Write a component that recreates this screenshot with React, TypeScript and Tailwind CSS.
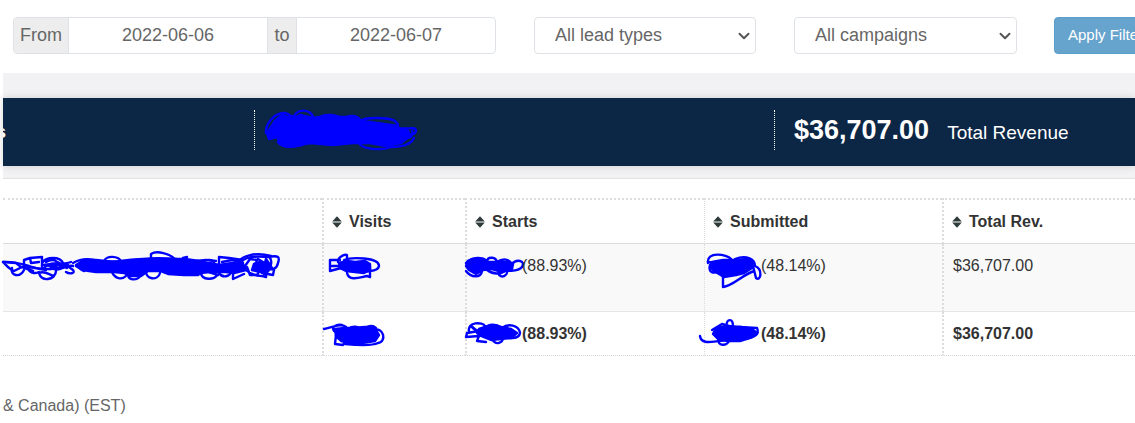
import type { ReactNode } from "react";
import { ChevronDown } from "lucide-react";

type ScribbleProps = {
  viewBox: string;
  className: string;
  fills?: string[];
  lines: string[];
};

// pen marks that hide the private numbers
function Scribble({ viewBox, className, fills = [], lines }: ScribbleProps) {
  return (
    <svg
      viewBox={viewBox}
      className={`shrink-0 overflow-visible ${className}`}
      fill="none"
      stroke="#0000ff"
      strokeWidth="2.4"
      strokeLinecap="round"
      strokeLinejoin="round"
      aria-hidden="true"
    >
      {fills.map((d) => (
        <path key={d} d={d} fill="#0000ff" />
      ))}
      {lines.map((d) => (
        <path key={d} d={d} />
      ))}
    </svg>
  );
}

function SortIcon() {
  return (
    <svg viewBox="0 0 10 12" className="h-3 w-[10px] shrink-0" fill="#2f3a3a" aria-hidden="true">
      <path d="M5 0.3 L9.8 5.4 H0.2 Z" />
      <path d="M5 11.7 L9.8 6.6 H0.2 Z" />
    </svg>
  );
}

function SortHeader({ children, className }: { children: ReactNode; className: string }) {
  return (
    <th scope="col" className={`border-t-2 border-b border-t-[#dcdcdc] border-b-[#d9dcdf] border-l-[#dcdcdc] pt-[10px] pb-[9px] pl-2 text-left [border-top-style:dotted] [border-left-style:dotted] ${className}`}>
      <button type="button" className="flex items-center gap-[7px] font-bold">
        <SortIcon />
        {children}
      </button>
    </th>
  );
}

function FilterSelect({ label, options, className }: { label: string; options: string[]; className: string }) {
  return (
    <div className={`relative shrink-0 ${className}`}>
      <select
        aria-label={label}
        className="h-[37px] w-full appearance-none rounded border border-[#dee2e6] bg-white pb-px pl-5 text-lg leading-6 text-[#666]"
      >
        {options.map((o) => (
          <option key={o}>{o}</option>
        ))}
      </select>
      <ChevronDown
        className="pointer-events-none absolute top-[10px] right-[3px] text-[#555]"
        size={18}
        strokeWidth={2.6}
      />
    </div>
  );
}

const cell = "pl-[9px] align-top border-l-[#dcdcdc] [border-left-style:dotted]";
const bodyCell = `${cell} border-b border-b-[#e4e6e8] bg-[#f9f9f9] pt-[10px] pb-[33px]`;
const totalCell = `${cell} border-b border-b-[#d4d4d4] [border-bottom-style:dotted] pt-[10px] pb-[9px] font-bold`;

export default function App() {
  return (
    <div className="overflow-x-hidden bg-white pb-4 pl-[3px] font-['Liberation_Sans',Arial,sans-serif] text-base leading-6 text-[#333]">
      <form className="flex pt-[17px] pb-[19px] pl-[10px]" onSubmit={(e) => e.preventDefault()}>
        <div className="mr-[38px] flex h-[37px] w-[483px] shrink-0 overflow-hidden rounded border border-[#dee2e6] text-lg leading-6 text-[#666]">
          <label htmlFor="from" className="flex w-[55px] items-center justify-center border-r border-[#dee2e6] bg-[#ededed] pb-px">
            From
          </label>
          <input id="from" type="text" defaultValue="2022-06-06" className="min-w-0 flex-1 pb-px text-center" />
          <label htmlFor="to" className="flex w-[30px] items-center justify-center border-x border-[#dee2e6] bg-[#ededed] pb-px">
            to
          </label>
          <input id="to" type="text" defaultValue="2022-06-07" className="min-w-0 flex-1 pb-px text-center" />
        </div>
        <FilterSelect label="Lead type" options={["All lead types"]} className="mr-[38px] w-[222px]" />
        <FilterSelect label="Campaign" options={["All campaigns"]} className="mr-[37px] w-[223px]" />
        <button type="submit" className="h-[37px] shrink-0 rounded border border-[#5b9ec9] bg-[#66a4cd] px-[13px] pb-px text-[15px] text-white">
          Apply Filters
        </button>
      </form>

      <section className="border-b border-[#e2e2e2] bg-[#f2f2f4] pt-[25px] pb-3">
        <div className="flex bg-[#0c2646] py-3 text-white shadow-[0_0_8px_rgba(0,0,0,0.15)]">
          <div className="flex h-11 w-[251px] shrink-0 items-center">
            <div className="flex w-[3px] justify-end overflow-hidden text-[19px] font-bold">s</div>
          </div>
          <div className="flex h-10 w-[520px] shrink-0 items-center border-l border-dotted border-white pl-[10px]">
            <Scribble
              viewBox="265 108 152 40"
              className="h-10 w-[152px]"
              fills={[
                "M267 131 L275 119 L282 113 L293 117 L300 113 L313 116 L327 114 L340 115 L353 115 L364 121 L380 122 L394 126 L408 129 L410 134 L401 141 L386 144 L370 141 L353 141 L333 143 L310 141 L294 144 L280 141 L277 135 L269 137 Z",
              ]}
              lines={[
                "M266 131 C265 122 275 110 285 111 C291 112 292 118 286 119 M294 118 C293 109 303 107 309 110 C314 113 315 118 308 120",
                "M320 118 C318 111 340 112 340 117 M346 118 C347 112 358 113 361 119 C364 115 388 115 395 119 C399 122 399 127 396 129",
                "M278 140 C284 148 297 144 302 143 M360 140 C357 147 382 149 391 145 C402 145 411 142 414 136",
                "M397 126 C406 128 415 124 416 128 C416 134 408 132 404 133 C409 139 414 133 412 129",
                "M362 119 L384 122 L398 124 M276 120 L290 114 L304 116",
              ]}
            />
          </div>
          <div className="flex h-10 shrink-0 items-baseline border-l border-dotted border-white pl-[19px]">
            <strong className="text-[27px] leading-10">$36,707.00</strong>
            <span className="ml-[18px] text-[19px]">Total Revenue</span>
          </div>
        </div>
      </section>

      <table className="mt-[19px] w-full table-fixed border-separate border-spacing-0">
        <colgroup>
          <col className="w-[319px]" />
          <col className="w-[143px]" />
          <col className="w-[239px]" />
          <col className="w-[238px]" />
          <col />
        </colgroup>
        <thead>
          <tr>
            <td className="border-t-2 border-b border-t-[#dcdcdc] border-b-[#d9dcdf] [border-top-style:dotted]" />
            <SortHeader className="border-l-2">Visits</SortHeader>
            <SortHeader className="border-l-2">Starts</SortHeader>
            <SortHeader className="border-l">Submitted</SortHeader>
            <SortHeader className="border-l-2">Total Rev.</SortHeader>
          </tr>
        </thead>
        <tbody>
          <tr>
            <td className="border-b border-b-[#e4e6e8] bg-[#f9f9f9] pt-[10px] align-top">
              <Scribble
                viewBox="3 254 276 24"
                className="h-6 w-[276px]"
                fills={[
                  "M76 265 L84 260 L96 260 L105 261 L120 262 L135 260 L152 259 L170 259 L185 259 L199 261 L206 263 L204 270 L198 275 L184 275 L168 274 L160 271 L148 271 L141 276 L130 276 L124 273 L114 272 L96 272 L82 270 Z",
                  "M200 264 L210 263 L219 265 L232 263 L243 264 L246 270 L234 273 L226 272 L210 272 L200 273 Z",
                  "M254 264 L260 262 L269 264 L268 271 L260 272 L252 270 Z",
                ]}
                lines={[
                  "M3 262 C14 261 21 264 29 266 C37 269 48 270 62 268 C67 267 70 265 73 266 M3 262 C7 266 9 269 14 271 L22 267 L33 271",
                  "M3 262 L16 263 L21 267 M12 268 C10 276 20 278 24 270 M24 267 L24 260 L30 258 L42 257 L42 267 M30 258 L31 263 L39 262",
                  "M28 268 C30 275 37 273 39 272 C40 283 56 280 56 271 M39 273 C45 270 49 275 54 276 M24 266 L46 270",
                  "M43 262 C46 257 60 256 63 263 C66 269 57 271 51 268 M46 262 C52 258 58 261 62 266 M44 268 C49 262 60 262 67 268",
                  "M50 265 L68 265 L58 268 L46 265 M50 269 C58 263 66 264 73 270 C76 274 69 274 66 272 M43 265 C52 263 64 265 71 262",
                  "M73 263 C80 259 86 258 94 260 M76 266 L84 271",
                  "M104 261 C107 255 118 256 121 261 M112 262 C137 258 166 257 183 260",
                  "M151 260 L151 254 C157 250 170 254 175 259 M183 258 L187 257 M186 262 L206 260 L216 261",
                  "M112 272 C115 279 122 280 126 276 M128 275 C129 281 139 281 141 274 M146 270 C145 280 158 281 160 273",
                  "M201 263 C206 259 212 259 214 262 M201 272 C200 281 216 280 217 275 M206 271 L218 275",
                  "M219 266 L219 257 L229 258 L243 260 M222 262 L232 260 L243 263 M219 273 C223 279 230 276 231 272",
                  "M233 272 L233 279 L244 274 M236 264 C242 255 256 252 271 256",
                  "M241 262 C246 256 257 256 268 257 C279 255 280 257 278 263 C277 269 272 270 268 269",
                  "M245 266 L250 259 L257 260 L254 269 M258 259 L266 264 L274 270 L273 275 L262 273 L266 259 L272 268",
                  "M246 270 C253 277 260 275 266 277 L267 262 M247 267 L250 275 L257 275 L262 266 M270 258 C273 262 270 272 264 274",
                ]}
              />
            </td>
            <td className={`${bodyCell} border-l-2`}>
              <Scribble
                viewBox="332 254 50 24"
                className="-ml-[2px] h-6 w-[50px]"
                fills={["M340 263 L348 261 L356 262 L366 261 L371 264 L371 270 L365 273 L356 272 L347 271 L341 268 Z"]}
                lines={[
                  "M341 260 L331 260 L331 271 L342 268 M333 266 H344 M339 262 C339 256 347 254 348 255 L348 262",
                  "M345 260 C352 257 380 257 380 266 C379 272 366 272 355 270 M348 273 C350 282 362 277 368 276 L371 277 L371 266",
                ]}
              />
            </td>
            <td className={`${bodyCell} border-l-2`}>
              <div className="flex">
                <Scribble
                  viewBox="466 254 56 24"
                  className="-ml-[11px] mr-px h-6 w-14"
                  fills={["M469 261 L478 259 L489 262 L498 262 L509 262 L514 264 L513 269 L503 272 L493 269 L484 270 L477 274 L470 270 L467 266 Z"]}
                  lines={[
                    "M467 263 C473 256 484 257 488 261 C489 256 497 257 498 262 C504 258 510 259 513 264 C517 259 527 260 523 267 C519 272 506 271 501 270",
                    "M467 271 C472 278 482 278 483 271 M488 270 C495 275 502 274 507 270 M499 273 C502 280 509 275 508 271",
                  ]}
                />
                <span>(88.93%)</span>
              </div>
            </td>
            <td className={`${bodyCell} border-l`}>
              <div className="flex">
                <Scribble
                  viewBox="706 254 54 24"
                  className="-ml-2 mr-px h-6 w-[54px]"
                  fills={["M712 262 L723 260 L735 260 L748 259 L753 262 L752 268 L744 273 L736 275 L724 277 L714 271 L710 267 Z"]}
                  lines={[
                    "M708 263 C706 251 727 254 731 259 C733 264 719 262 709 262 M710 265 C708 273 714 274 718 271",
                    "M735 259 C747 254 755 260 755 266 C763 269 761 282 756 278 L753 266 M723 276 L723 287 C733 286 742 275 754 271",
                  ]}
                />
                <span>(48.14%)</span>
              </div>
            </td>
            <td className={`${bodyCell} border-l-2`}>$36,707.00</td>
          </tr>
          <tr>
            <td className="border-b border-b-[#d4d4d4] [border-bottom-style:dotted]" />
            <td className={`${totalCell} border-l-2`}>
              <Scribble
                viewBox="325 322 60 24"
                className="-ml-[9px] h-6 w-[60px]"
                fills={["M336 329 L346 328 L354 328 L366 327 L376 328 L380 335 L376 341 L363 343 L352 343 L342 341 L337 336 Z"]}
                lines={[
                  "M325 329 C334 327 342 323 347 327 C350 331 339 335 335 331 C332 327 337 324 343 325 M337 335 L336 344 L344 345 C347 342 345 336 339 338",
                  "M374 330 C385 326 388 342 379 343 C373 346 357 345 346 344 M349 329 C355 325 361 327 364 331 M364 329 C374 323 380 327 377 335",
                ]}
              />
            </td>
            <td className={`${totalCell} border-l-2`}>
              <div className="flex">
                <Scribble
                  viewBox="466 322 56 24"
                  className="-ml-[11px] mr-px h-6 w-14"
                  fills={["M480 329 L492 325 L502 327 L512 329 L518 333 L512 338 L502 339 L492 340 L482 336 L478 333 Z"]}
                  lines={[
                    "M470 332 C468 321 484 322 486 326 C484 334 476 331 473 327 M480 331 L468 333 L467 337 L480 336 L478 341 L487 342",
                    "M486 328 C493 322 500 326 503 328 C509 323 520 325 521 333 C520 340 509 338 504 337 M493 339 C497 346 504 343 504 337 M472 326 L482 334",
                  ]}
                />
                <span>(88.93%)</span>
              </div>
            </td>
            <td className={`${totalCell} border-l`}>
              <div className="flex">
                <Scribble
                  viewBox="700 322 60 24"
                  className="-ml-[14px] mr-px h-6 w-[60px]"
                  fills={["M716 328 L727 326 L741 327 L752 329 L757 333 L752 337 L740 341 L728 341 L718 339 L713 334 Z"]}
                  lines={[
                    "M700 336 C701 344 710 342 719 341 L728 340 M712 330 L722 324 L732 327 C735 326 733 329 728 329",
                    "M726 327 C727 317 733 319 733 326 M719 339 C716 346 728 347 729 340 M739 327 L757 328 C760 335 754 337 746 339",
                  ]}
                />
                <span>(48.14%)</span>
              </div>
            </td>
            <td className={`${totalCell} border-l-2`}>$36,707.00</td>
          </tr>
        </tbody>
      </table>

      <p className="mt-[38px] text-[#666]">&amp; Canada) (EST)</p>
    </div>
  );
}
